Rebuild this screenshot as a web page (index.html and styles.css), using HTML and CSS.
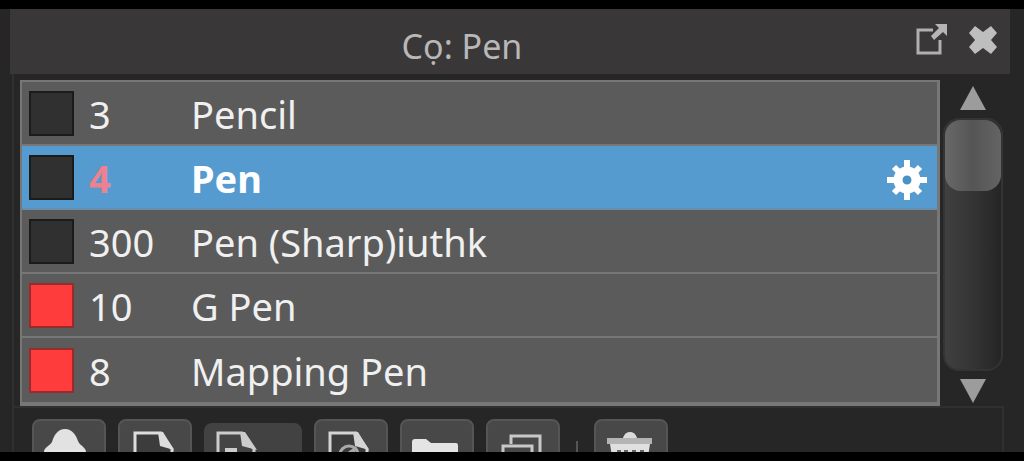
FILE: index.html
```html
<!DOCTYPE html>
<html lang="vi">
<head>
<meta charset="utf-8">
<title>Cọ: Pen</title>
<link rel="stylesheet" href="styles.css">
</head>
<body>
<main class="workspace">
  <section class="panel">
    <header class="titlebar">
      <h1 class="title">Cọ: Pen</h1>
      <div class="window-actions">
        <button class="icon-button" type="button" aria-label="Pop out">
          <svg width="34" height="34" viewBox="0 0 34 34"><path d="M19 7H4v23h22V17" fill="none" stroke="#b0b0b0" stroke-width="3"/><path d="M21 1h12v12l-4-4-9 8-3-4 8-8z" fill="#b5b5b5"/></svg>
        </button>
        <button class="icon-button" type="button" aria-label="Close">
          <svg width="30" height="32" viewBox="0 0 30 32"><path d="M7 3l8 6 8-6 6 7-6 7 6 7-6 7-8-6-8 6-6-7 6-7-6-7z" fill="#bebebe"/></svg>
        </button>
      </div>
    </header>
    <div class="content">
      <table class="brushes">
        <tbody>
          <tr class="brush">
            <td class="color"><span class="swatch"></span></td><td class="size">3</td><td class="name">Pencil</td><td class="settings"></td>
          </tr>
          <tr class="brush selected">
            <td class="color"><span class="swatch"></span></td><td class="size">4</td><td class="name">Pen</td>
            <td class="settings">
              <button class="icon-button" type="button" aria-label="Brush settings">
                <svg width="40" height="40" viewBox="0 0 40 40"><g stroke="#fff" stroke-width="6"><path d="M20 0v12M20 28v12M0 20h12M28 20h12M7 7l8 8M25 25l8 8M33 7l-8 8M15 25l-8 8"/></g><circle cx="20" cy="20" r="9" fill="none" stroke="#fff" stroke-width="9"/><circle cx="20" cy="20" r="4" fill="#4c91c4"/></svg>
              </button>
            </td>
          </tr>
          <tr class="brush">
            <td class="color"><span class="swatch"></span></td><td class="size">300</td><td class="name">Pen (Sharp)iuthk</td><td class="settings"></td>
          </tr>
          <tr class="brush">
            <td class="color"><span class="swatch red"></span></td><td class="size">10</td><td class="name">G Pen</td><td class="settings"></td>
          </tr>
          <tr class="brush">
            <td class="color"><span class="swatch red"></span></td><td class="size">8</td><td class="name">Mapping Pen</td><td class="settings"></td>
          </tr>
        </tbody>
      </table>
      <div class="scrollbar">
        <button class="icon-button" type="button" aria-label="Scroll up">
          <svg width="26" height="24" viewBox="0 0 26 24"><path d="M13 0l13 24H0z" fill="#9c9c9c"/></svg>
        </button>
        <div class="track"><div class="thumb"></div></div>
        <button class="icon-button" type="button" aria-label="Scroll down">
          <svg width="26" height="24" viewBox="0 0 26 24"><path d="M0 0h26L13 24z" fill="#9c9c9c"/></svg>
        </button>
      </div>
    </div>
    <footer class="toolbar">
      <button class="tool" type="button" aria-label="Cloud brushes">
        <svg width="74" height="60" viewBox="0 0 74 60"><path d="M12 33c0-5 6-6 8-10 2-7 6-13 13-13s11 6 13 12c2 5 8 6 8 11 0 9-4 12-10 12H22c-6 0-10-3-10-12z" fill="#e2e2e2"/></svg>
      </button>
      <button class="tool" type="button" aria-label="Add brush">
        <svg width="74" height="60" viewBox="0 0 74 60"><path d="M17 50V14h26l11 16v20z" fill="#3c3c3c" stroke="#ddd" stroke-width="3"/><path d="M40 13h5l11 18-14-4z" fill="#ddd"/></svg>
      </button>
      <button class="tool wide" type="button" aria-label="Add brush from image">
        <svg width="74" height="60" viewBox="0 0 74 60"><path d="M14 46V10h24l12 16v20z" fill="#444" stroke="#ccc" stroke-width="3"/><path d="M36 9h5l12 18-15-4z" fill="#ccc"/><path d="M21 27h12" stroke="#ccc" stroke-width="4"/></svg>
      </button>
      <button class="tool" type="button" aria-label="Add brush from script">
        <svg width="74" height="60" viewBox="0 0 74 60"><path d="M16 50V14h26l11 16v20z" fill="#3c3c3c" stroke="#d4d4d4" stroke-width="3"/><path d="M39 13h5l11 18-14-4z" fill="#d4d4d4"/><circle cx="35" cy="36" r="9" fill="none" stroke="#a8a8a8" stroke-width="3"/><path d="M33 36l10-7" stroke="#a8a8a8" stroke-width="4"/></svg>
      </button>
      <button class="tool" type="button" aria-label="Add folder">
        <svg width="74" height="60" viewBox="0 0 74 60"><path d="M12 47V23q0-3 3-3h11l5 4h25q2 0 2 3v20z" fill="#e4e4e4"/></svg>
      </button>
      <button class="tool" type="button" aria-label="Duplicate brush">
        <svg width="74" height="60" viewBox="0 0 74 60"><path d="M25 25v-8h29v25h-7" fill="none" stroke="#c8c8c8" stroke-width="3"/><rect x="17" y="27" width="29" height="22" fill="none" stroke="#c8c8c8" stroke-width="3"/></svg>
      </button>
      <span class="divider"></span>
      <button class="tool" type="button" aria-label="Delete brush">
        <svg width="74" height="60" viewBox="0 0 74 60"><path d="M13 19h16q2-6 7-6t7 6h15v6H13z" fill="#b4b4b4"/><path d="M29 19q2-6 7-6t7 6z" fill="#dadada"/><path d="M16 25h40l-4 25H20z" fill="#e0e0e0"/><path d="M25 31v20M32 31v20M40 31v20M48 31v20" stroke="#666" stroke-width="4"/></svg>
      </button>
    </footer>
  </section>
</main>
</body>
</html>
```
FILE: styles.css
```css
* {
  box-sizing: border-box;
}

body {
  margin: 0;
  height: 100vh;
  padding: 9px 0;
  overflow: hidden;
  background: #000;
  color: #f0f0f0;
  font-family: "Noto Sans", "Open Sans", sans-serif;
  font-size: 38px;
  line-height: 44px;
}

button {
  margin: 0;
  padding: 0;
  border: 0;
  background: none;
  font: inherit;
}

svg {
  display: block;
}

.workspace {
  height: 100%;
  padding: 0 14px 0 10px;
  overflow: hidden;
  background: #262626;
}

.panel {
  display: flex;
  flex-direction: column;
}

.titlebar {
  display: flex;
  height: 65px;
  padding: 0 12px 0 0;
  background: #393738;
}

.title {
  flex: 1;
  margin: 0;
  padding: 15px 0 0;
  color: #b8b8b8;
  font-size: 34px;
  font-weight: 400;
  text-align: center;
}

.window-actions {
  display: flex;
  gap: 20px;
  justify-content: flex-end;
  padding-top: 14px;
}

.icon-button {
  display: flex;
  justify-content: center;
}

.content {
  display: flex;
  margin-left: 2px;
  padding: 6px 6px 0;
  border-left: 2px solid #303030;
}

.brushes {
  flex: 1;
  border: 3px solid #777;
  border-width: 2px 3px 4px 2px;
  border-collapse: separate;
  border-spacing: 0;
  table-layout: fixed;
  background: #5b5b5b;
}

.brush td {
  height: 64px;
  padding: 0;
  border-bottom: 2px solid #777;
}

.brush .size,
.brush .name,
.brush .settings {
  padding-top: 2px;
}

.brush:last-child td {
  border-bottom: 0;
}

.brush .color {
  width: 67px;
  padding-left: 7px;
}

.brush .size {
  width: 102px;
}

.brush .settings {
  width: 50px;
}

.settings .icon-button {
  margin-top: 4px;
}

.swatch {
  display: block;
  width: 45px;
  height: 45px;
  border: 2px solid #1b1b1b;
  background: #303030;
}

.swatch.red {
  border-color: #982b2b;
  background: #ff3c3c;
}

.selected {
  background: #559bd0;
  color: #fff;
  font-weight: 700;
}

.selected td {
  border-bottom-color: #668da9;
}

.selected .size {
  color: #ec8290;
}

.scrollbar {
  display: flex;
  flex-direction: column;
  gap: 8px;
  align-items: center;
  width: 64px;
  padding: 6px 0 3px 2px;
}

.track {
  flex: 1;
  width: 60px;
  border: 2px solid #343434;
  border-radius: 16px;
  background: linear-gradient(90deg, #404040, #333 55%, #252525);
}

.thumb {
  height: 71px;
  border-radius: 16px;
  background: linear-gradient(90deg, #686868, #555 50%, #646464);
}

.toolbar {
  display: flex;
  gap: 12px;
  margin: 0 6px 0 2px;
  padding: 11px 18px 0;
  border: 2px solid #303030;
  border-bottom: 0;
}

.tool {
  flex: none;
  width: 74px;
  height: 60px;
  border: 2px solid #555;
  border-radius: 8px;
  background: #484848;
}

.tool svg {
  margin: -2px;
}

.tool.wide {
  width: 98px;
  margin-top: 4px;
  border-color: #424242;
  background: #424242;
}

.divider {
  flex: none;
  width: 2px;
  height: 40px;
  margin: 22px 4px 0;
  background: #555;
}
```
